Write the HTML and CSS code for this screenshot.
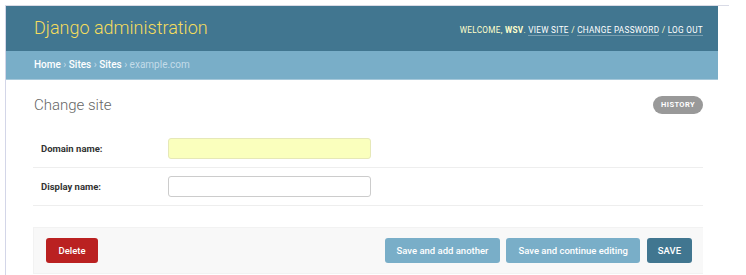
FILE: index.html
```html
<!DOCTYPE html>
<html>
  <head>
    <title>Change site | Django site admin</title>
    <meta charset="UTF-8" />
    <link rel="stylesheet" href="styles.css">
  </head>
  <body>
    <div class="frame">
      <div class="header">
        <div class="branding">Django administration</div>
        <div class="user-tools">
          Welcome, <strong>wsv</strong>.
          <a href="#">View site</a> /
          <a href="#">Change password</a> /
          <a href="#">Log out</a>
        </div>
      </div>
      <div class="breadcrumbs">
        <a href="#">Home</a> › <a href="#">Sites</a> › <a href="#">Sites</a> › example.com
      </div>

      <div class="content">
        <div class="content-head">
          <h1>Change site</h1>
          <a class="history" href="#">History</a>
        </div>

        <form>
          <div class="form-row">
            <label for="id_domain">Domain name:</label>
            <input id="id_domain" class="autofill" type="text">
          </div>
          <div class="form-row">
            <label for="id_name">Display name:</label>
            <input id="id_name" type="text">
          </div>

          <div class="submit-row">
            <a class="deletelink" href="#">Delete</a>
            <div class="save-group">
              <button type="button" class="btn">Save and add another</button>
              <button type="button" class="btn">Save and continue editing</button>
              <button type="button" class="btn default">SAVE</button>
            </div>
          </div>
        </form>
      </div>
    </div>
  </body>
</html>
```

FILE: styles.css
```css
html {
  height: 100%;
}
body {
  margin: 0;
  font-family: Roboto, "Liberation Sans", sans-serif;
  color: #333;
  background: #fff;
}

.frame {
  margin: 5px 0 0 5px;
  width: 723px;
  height: 270px;
  border-left: 1px solid #d3d6e8;
  border-top: 1px solid #d9dbe6;
  overflow: hidden;
}

.header {
  width: 669px;
  height: 45px;
  padding: 0 15px 0 28px;
  background: #417690;
  display: flex;
  align-items: center;
  justify-content: space-between;
}
.branding {
  color: #f5dd5d;
  font-size: 18px;
  font-weight: 300;
  padding-bottom: 2px;
}
.user-tools {
  color: #ffc;
  font-size: 8.2px;
  text-transform: uppercase;
  letter-spacing: 0.3px;
  padding-top: 2px;
}
.user-tools strong {
  font-weight: 700;
}
.user-tools a {
  color: #fff;
  text-decoration: none;
  border-bottom: 1px solid rgba(255, 255, 255, 0.3);
}

.breadcrumbs {
  width: 669px;
  height: 28px;
  padding: 0 15px 0 28px;
  background: #79aec8;
  border-bottom: 1px solid #a6c8da;
  color: #c4dce8;
  font-size: 10px;
  line-height: 28px;
}
.breadcrumbs a {
  color: #fff;
  font-weight: 500;
  text-decoration: none;
}

.content {
  width: 670px;
  padding: 16px 0 0 27px;
}
.content-head {
  display: flex;
  align-items: center;
  justify-content: space-between;
  padding-left: 1px;
}
h1 {
  margin: 0;
  font-size: 15px;
  font-weight: 300;
  color: #666;
}
.history {
  background: #999;
  color: #fff;
  font-size: 7.5px;
  font-weight: 700;
  letter-spacing: 0.4px;
  text-transform: uppercase;
  text-decoration: none;
  line-height: 18px;
  padding: 0 8px;
  border-radius: 10px;
}

form {
  margin-top: 16px;
}
.form-row {
  display: flex;
  align-items: center;
  padding: 8px 0 8px 8px;
  border-bottom: 1px solid #eee;
}
.form-row label {
  width: 127px;
  font-size: 9.5px;
  font-weight: 700;
  color: #333;
}
.form-row input {
  width: 199px;
  height: 17px;
  margin: 0;
  padding: 1px;
  border: 1px solid #ccc;
  border-radius: 3px;
  background: #fff;
}
.form-row input.autofill {
  background: #faffbd;
  border-color: #e6e8b8;
}

.submit-row {
  margin-top: 21px;
  height: 45px;
  padding: 0 11px 0 12px;
  background: #f8f8f8;
  border: 1px solid #f2f2f2;
  border-right: none;
  display: flex;
  align-items: center;
  justify-content: space-between;
}
.deletelink {
  background: #ba2121;
  color: #fff;
  font-size: 9.5px;
  font-weight: 500;
  text-decoration: none;
  line-height: 25px;
  width: 52px;
  text-align: center;
  border-radius: 3px;
}
.save-group {
  display: flex;
  gap: 6px;
}
.btn {
  font-family: inherit;
  height: 25px;
  padding: 0 12px;
  border: none;
  border-radius: 3px;
  background: #79aec8;
  color: #fff;
  font-size: 9.5px;
  font-weight: 500;
}
.btn.default {
  background: #417690;
  padding: 0 11px;
  margin-left: 1px;
}
```
